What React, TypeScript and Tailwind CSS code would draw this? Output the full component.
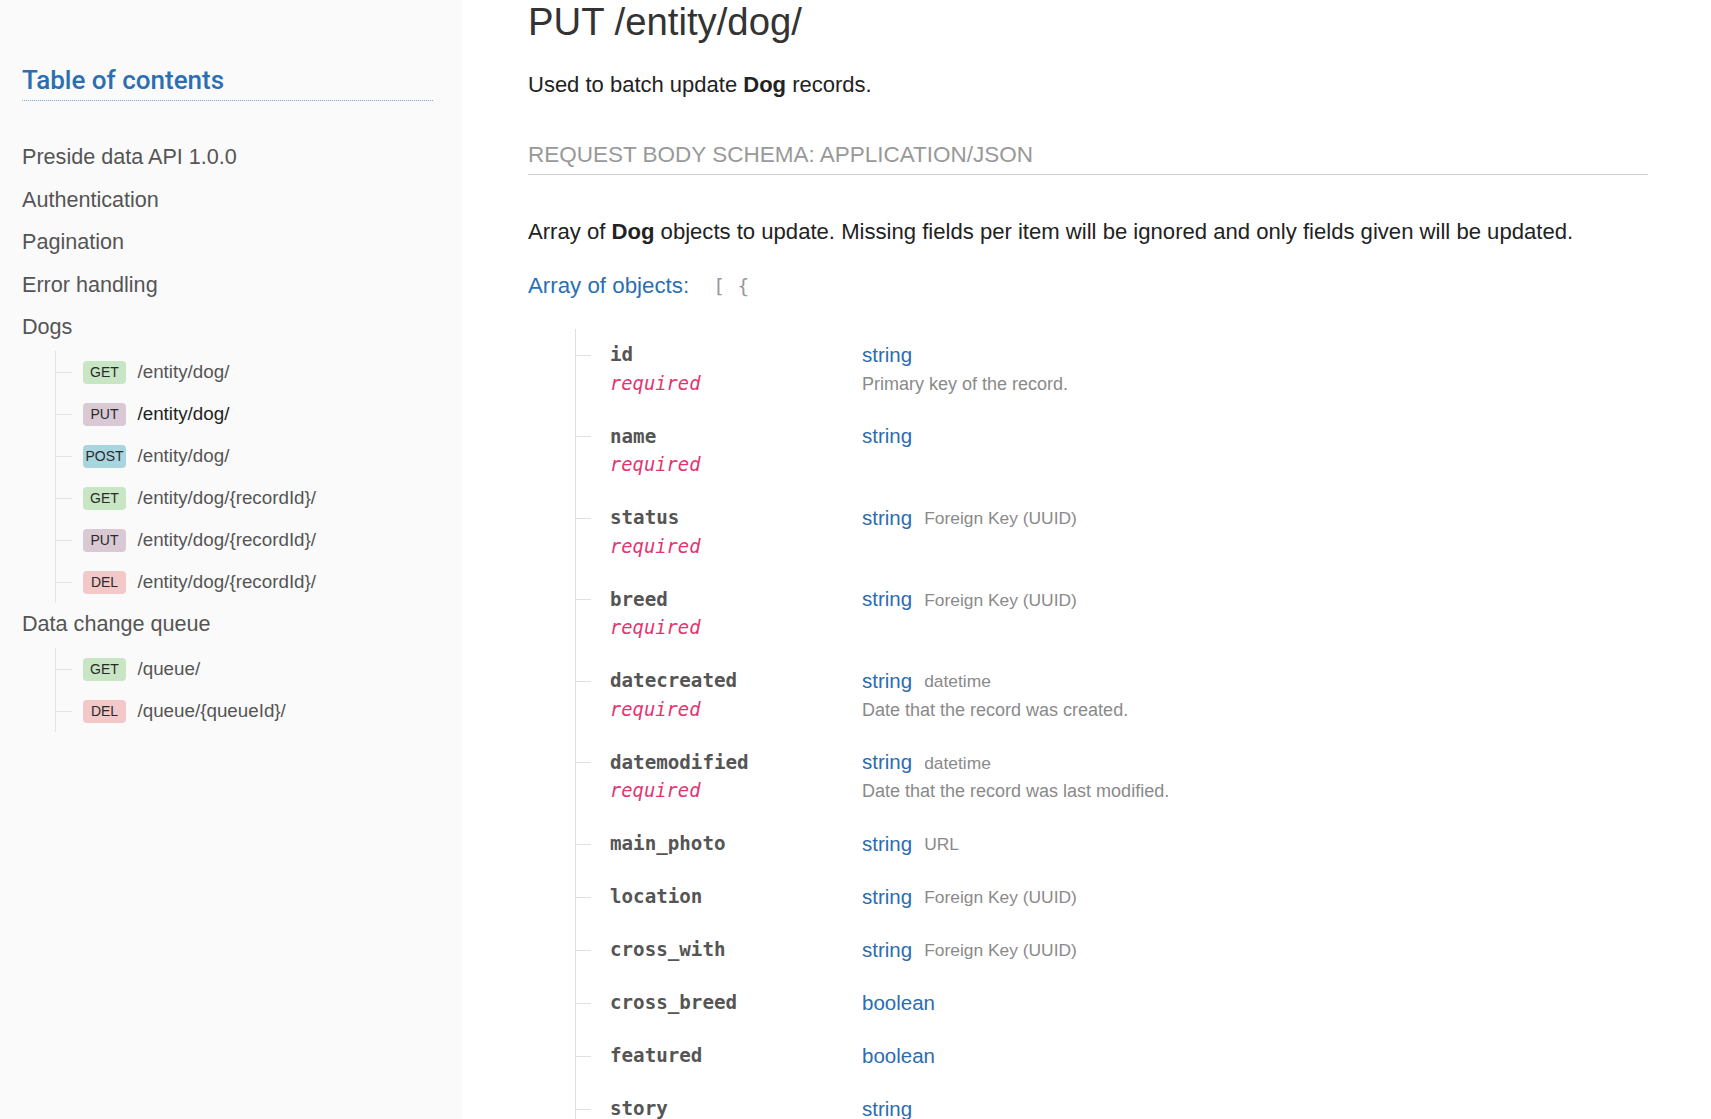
import React from 'react'

type Endpoint = { method: 'GET' | 'PUT' | 'POST' | 'DEL'; path: string; active?: boolean }

const badgeColors: Record<Endpoint['method'], string> = {
  GET: 'bg-[#c8e6c4]',
  PUT: 'bg-[#d9c9d4]',
  POST: 'bg-[#a9d5df]',
  DEL: 'bg-[#f2c8c8]',
}

const dogEndpoints: Endpoint[] = [
  { method: 'GET', path: '/entity/dog/' },
  { method: 'PUT', path: '/entity/dog/', active: true },
  { method: 'POST', path: '/entity/dog/' },
  { method: 'GET', path: '/entity/dog/{recordId}/' },
  { method: 'PUT', path: '/entity/dog/{recordId}/' },
  { method: 'DEL', path: '/entity/dog/{recordId}/' },
]

const queueEndpoints: Endpoint[] = [
  { method: 'GET', path: '/queue/' },
  { method: 'DEL', path: '/queue/{queueId}/' },
]

type Field = { name: string; required?: boolean; type: string; format?: string; desc?: string }

const fields: Field[] = [
  { name: 'id', required: true, type: 'string', desc: 'Primary key of the record.' },
  { name: 'name', required: true, type: 'string' },
  { name: 'status', required: true, type: 'string', format: 'Foreign Key (UUID)' },
  { name: 'breed', required: true, type: 'string', format: 'Foreign Key (UUID)' },
  { name: 'datecreated', required: true, type: 'string', format: 'datetime', desc: 'Date that the record was created.' },
  { name: 'datemodified', required: true, type: 'string', format: 'datetime', desc: 'Date that the record was last modified.' },
  { name: 'main_photo', type: 'string', format: 'URL' },
  { name: 'location', type: 'string', format: 'Foreign Key (UUID)' },
  { name: 'cross_with', type: 'string', format: 'Foreign Key (UUID)' },
  { name: 'cross_breed', type: 'boolean' },
  { name: 'featured', type: 'boolean' },
  { name: 'story', type: 'string' },
  { name: 'age', type: 'string' },
]

const sans = "font-['Liberation_Sans',Arial,sans-serif]"
const mono = "font-['DejaVu_Sans_Mono',monospace]"

function EndpointList({ items, className }: { items: Endpoint[]; className?: string }) {
  return (
    <div className={`ml-[33px] border-l border-[#e4e4e4] ${className ?? ''}`}>
      {items.map((e, i) => (
        <div key={i} className="flex h-[42px] items-center">
          <div className="h-px w-[16px] bg-[#e4e4e4]" />
          <span
            className={`ml-[11px] flex h-[23px] w-[43px] items-center justify-center rounded-[4px] text-[14px] text-[#2a2a2a] ${badgeColors[e.method]}`}
          >
            {e.method}
          </span>
          <span className={`ml-[11.5px] text-[18.8px] ${e.active ? 'text-[#222]' : 'text-[#555]'}`}>{e.path}</span>
        </div>
      ))}
    </div>
  )
}

function Sidebar() {
  const top = ['Preside data API 1.0.0', 'Authentication', 'Pagination', 'Error handling']
  return (
    <aside className={`w-[462px] shrink-0 bg-[#fafafa] pl-[22px] pr-[29px] pt-[64px] ${sans}`}>
      <h2 className="border-b border-dotted border-[#7fa9d4] pb-[4px] font-['Roboto',sans-serif] text-[26px] font-medium leading-[32px] text-[#2b6fb2]">
        Table of contents
      </h2>
      <nav className="mt-[35px] text-[21.6px] text-[#555]">
        {top.map((t) => (
          <div key={t} className="leading-[42.5px]">{t}</div>
        ))}
        <div className="leading-[42.5px]">Dogs</div>
        <EndpointList items={dogEndpoints} className="mt-[2.5px]" />
        <div className="leading-[42.5px]">Data change queue</div>
        <EndpointList items={queueEndpoints} className="mt-[2.5px]" />
      </nav>
    </aside>
  )
}

function FieldRow({ f }: { f: Field }) {
  return (
    <div className="flex items-start pb-[12.5px] pt-[12px]">
      <div className="flex h-[28.5px] items-center">
        <div className="h-px w-[15px] bg-[#e0e0e0]" />
      </div>
      <div className={`ml-[19px] w-[252px] shrink-0 ${mono}`}>
        <div className="text-[19.2px] font-bold leading-[28.5px] text-[#555]">{f.name}</div>
        {f.required && <div className="text-[18.8px] italic leading-[28.5px] text-[#e5336f]">required</div>}
      </div>
      <div className="min-w-0 flex-1">
        <div className="flex h-[28.5px] items-center">
          <span className="text-[20.5px] text-[#2c6cb0]">{f.type}</span>
          {f.format && <span className="ml-[12px] text-[17.4px] text-[#8a8a8a]">{f.format}</span>}
        </div>
        {f.desc && <div className="text-[18px] leading-[28.5px] text-[#8a8a8a]">{f.desc}</div>}
      </div>
    </div>
  )
}

export default function App() {
  return (
    <div className={`flex h-[1119px] w-[1711px] overflow-hidden bg-white ${sans}`}>
      <Sidebar />
      <main className="min-w-0 flex-1 pl-[66px] pr-[63px]">
        <h1 className="text-[38.3px] leading-[44px] text-[#333]">PUT /entity/dog/</h1>
        <p className="mt-[26px] text-[22px] leading-[30px] text-[#222]">
          Used to batch update <b>Dog</b> records.
        </p>
        <h3 className="mt-[40px] border-b border-[#cccccc] pb-[4px] text-[22.5px] uppercase leading-[30px] text-[#999]">
          Request body schema: application/json
        </h3>
        <p className="mt-[42px] text-[22.1px] leading-[30px] text-[#222]">
          Array of <b>Dog</b> objects to update. Missing fields per item will be ignored and only fields given will be
          updated.
        </p>
        <div className="mt-[24px] flex items-center leading-[30px]">
          <span className="text-[22.3px] text-[#2b6fb2]">Array of objects:</span>
          <span className={`ml-[24px] text-[20px] text-[#999] ${mono}`}>[ {'{'}</span>
        </div>
        <div className="ml-[47px] mt-[28px] border-l border-[#e0e0e0]">
          {fields.map((f) => (
            <FieldRow key={f.name} f={f} />
          ))}
        </div>
      </main>
    </div>
  )
}
